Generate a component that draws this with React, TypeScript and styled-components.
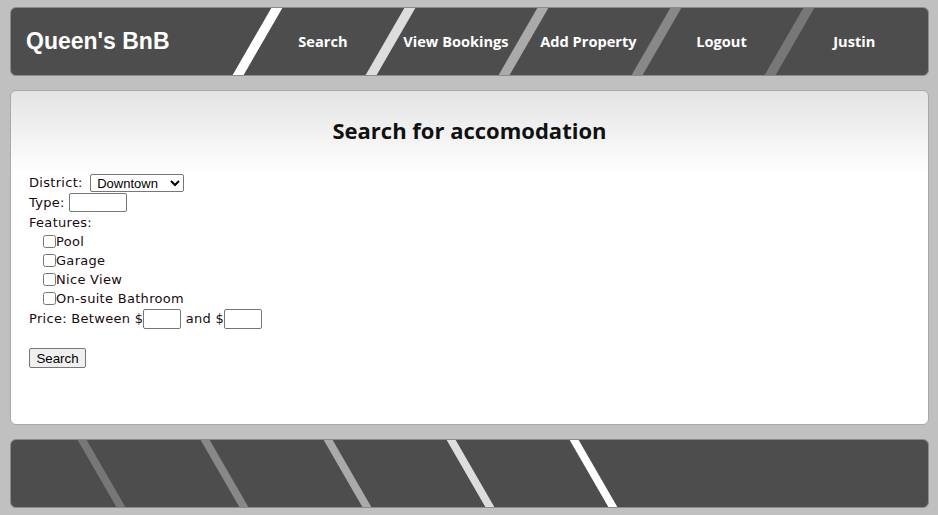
import styled, { createGlobalStyle } from "styled-components";

const GlobalStyle = createGlobalStyle`
	html, body {
		margin: 0;
		background-color: #c0c0c0;
	}
	body {
		padding: 7px 9px 8px 10px;
		font-family: "DejaVu Sans", sans-serif;
	}
`;

const Page = styled.div`
	display: flex;
	flex-direction: column;
	gap: 14px;
`;

const Header = styled.header`
	height: 69px;
	box-sizing: border-box;
	background-color: #4d4d4d;
	border: 1px solid #8c8c8c;
	border-radius: 6px;
	overflow: hidden;
	display: flex;
	align-items: stretch;
`;

const Logo = styled.div`
	width: 241px;
	flex-shrink: 0;
	padding-left: 15px;
	box-sizing: border-box;
	display: flex;
	align-items: center;
	color: white;
	font-family: "Liberation Sans", Arial, sans-serif;
	font-weight: 700;
	font-size: 23px;
`;

const NavItem = styled.a<{ $stripe: string }>`
	width: 133px;
	flex-shrink: 0;
	box-sizing: border-box;
	border-left: 11px solid ${props => props.$stripe};
	transform: skewX(-30deg);
	display: flex;
	justify-content: center;
	align-items: center;
	color: white;
	text-decoration: none;
	cursor: pointer;
	span {
		transform: skewX(30deg);
		font-family: "Open Sans", sans-serif;
		font-weight: 700;
		font-size: 14.6px;
		white-space: nowrap;
		margin: 0 3px 2px 0;
	}
`;

const Panel = styled.main`
	height: 335px;
	box-sizing: border-box;
	border: 1px solid #a9a9a9;
	border-radius: 6px;
	background: linear-gradient(#e4e4e4 0px, #ffffff 85px);
	padding: 0 18px;
`;

const Title = styled.h2`
	margin: 0;
	padding-top: 24px;
	height: 82px;
	box-sizing: border-box;
	text-align: center;
	font-family: "Open Sans", sans-serif;
	font-weight: 700;
	font-size: 22px;
	color: #111;
`;

const Form = styled.form`
	display: flex;
	flex-direction: column;
	font-size: 13px;
	letter-spacing: 0.3px;
	color: #1a0a10;
`;

const Row = styled.div<{ $h?: number; $indent?: boolean }>`
	height: ${props => props.$h ?? 19}px;
	display: flex;
	align-items: center;
	padding-left: ${props => (props.$indent ? 14 : 0)}px;
	white-space: pre;
`;

const Select = styled.select`
	width: 94px;
	height: 18px;
	margin-left: 3px;
	padding: 0 0 0 2px;
	font-family: "Liberation Sans", Arial, sans-serif;
	font-size: 13px;
	letter-spacing: 0;
	border: 1px solid #767676;
	border-radius: 2px;
	background: white;
	color: black;
`;

const TextInput = styled.input<{ $w: number; $h?: number }>`
	width: ${props => props.$w}px;
	height: ${props => props.$h ?? 19}px;
	box-sizing: border-box;
	margin: 0;
	border: 1px solid #767676;
	border-radius: 2px;
	padding: 0 2px;
`;

const Check = styled.input`
	width: 13px;
	height: 13px;
	margin: 0;
`;

const Button = styled.button`
	width: 57px;
	height: 20px;
	margin-top: 19px;
	padding: 0;
	font-family: "Liberation Sans", Arial, sans-serif;
	font-size: 13.33px;
	background-color: #efefef;
	border: 1px solid #767676;
	border-radius: 2px;
	color: black;
`;

const Footer = styled.footer`
	height: 69px;
	box-sizing: border-box;
	background-color: #4d4d4d;
	border: 1px solid #8c8c8c;
	border-radius: 6px;
	overflow: hidden;
	display: flex;
	padding-left: 86px;
`;

const FooterBand = styled.div<{ $stripe: string }>`
	width: 123px;
	flex-shrink: 0;
	box-sizing: border-box;
	border-left: 9px solid ${props => props.$stripe};
	transform: skewX(30deg);
`;

const navLinks = [
	{ label: "Search", stripe: "#ffffff" },
	{ label: "View Bookings", stripe: "#dddddd" },
	{ label: "Add Property", stripe: "#aaaaaa" },
	{ label: "Logout", stripe: "#888888" },
	{ label: "Justin", stripe: "#777777" },
];

const footerStripes = ["#777777", "#888888", "#aaaaaa", "#dddddd", "#ffffff"];

const features = ["Pool", "Garage", "Nice View", "On-suite Bathroom"];

function App() {
	return (
		<>
			<GlobalStyle />
			<Page>
				<Header>
					<Logo>Queen's BnB</Logo>
					{navLinks.map(link => (
						<NavItem key={link.label} $stripe={link.stripe}>
							<span>{link.label}</span>
						</NavItem>
					))}
				</Header>
				<Panel>
					<Title>Search for accomodation</Title>
					<Form onSubmit={e => e.preventDefault()}>
						<Row>
							{"District: "}
							<Select defaultValue="Downtown">
								<option>Downtown</option>
								<option>Suburbs</option>
								<option>Waterfront</option>
							</Select>
						</Row>
						<Row $h={20}>
							{"Type: "}
							<TextInput type="text" $w={58} />
						</Row>
						<Row $h={20}>Features:</Row>
						{features.map(f => (
							<Row key={f} $indent>
								<Check type="checkbox" />
								{f}
							</Row>
						))}
						<Row $h={21}>
							{"Price: Between $"}
							<TextInput type="text" $w={38} $h={20} />
							{" and $"}
							<TextInput type="text" $w={38} $h={20} />
						</Row>
						<div>
							<Button type="submit">Search</Button>
						</div>
					</Form>
				</Panel>
				<Footer>
					{footerStripes.map(c => (
						<FooterBand key={c} $stripe={c} />
					))}
				</Footer>
			</Page>
		</>
	);
}

export default App;
